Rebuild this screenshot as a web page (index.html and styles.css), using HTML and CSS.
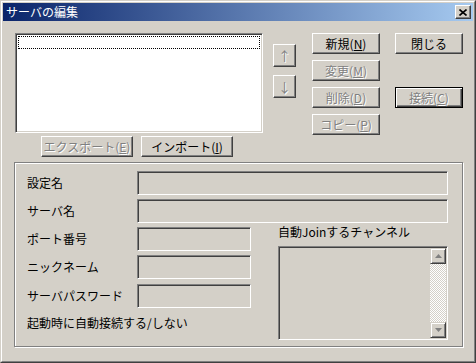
FILE: index.html
```html
<!DOCTYPE html>
<html lang="ja">
<head>
    <meta charset="UTF-8">
    <title>サーバの編集</title>
    <link rel="stylesheet" href="styles.css">
</head>
<body>

<div class="window">
  <div class="frame">
    <div class="titlebar">
        <span class="title">サーバの編集</span>
        <button class="close-btn">
            <svg width="8" height="7" viewBox="0 0 8 7"><path d="M0.5 0.5 L7.5 6.5 M7.5 0.5 L0.5 6.5" stroke="#000" stroke-width="1.6" fill="none"/></svg>
        </button>
    </div>

    <div class="content">
        <div class="top">
            <div class="list-col">
                <div class="listbox">
                    <div class="focus-row"></div>
                </div>
                <div class="io-row">
                    <button class="btn wide disabled">エクスポート(<u>E</u>)</button>
                    <button class="btn wide">インポート(<u>I</u>)</button>
                </div>
            </div>

            <div class="arrows">
                <button class="btn square disabled">↑</button>
                <button class="btn square disabled">↓</button>
            </div>

            <div class="cmds">
                <button class="btn">新規(<u>N</u>)</button>
                <button class="btn disabled">変更(<u>M</u>)</button>
                <button class="btn disabled">削除(<u>D</u>)</button>
                <button class="btn disabled">コピー(<u>P</u>)</button>
            </div>

            <div class="side">
                <button class="btn">閉じる</button>
                <button class="btn default disabled connect">接続(<u>C</u>)</button>
            </div>
        </div>

        <div class="group">
            <div class="row">
                <label class="label">設定名</label>
                <div class="field"></div>
            </div>
            <div class="row">
                <label class="label">サーバ名</label>
                <div class="field"></div>
            </div>

            <div class="lower">
                <div class="left-col">
                    <div class="row">
                        <label class="label">ポート番号</label>
                        <div class="field small"></div>
                    </div>
                    <div class="row">
                        <label class="label">ニックネーム</label>
                        <div class="field small"></div>
                    </div>
                    <div class="row">
                        <label class="label">サーバパスワード</label>
                        <div class="field small"></div>
                    </div>
                    <div class="autoconnect">起動時に自動接続する/しない</div>
                </div>

                <div class="right-col">
                    <div class="chan-label">自動Joinするチャンネル</div>
                    <div class="chan-list">
                        <div class="scrollbar">
                            <div class="sb-btn">
                                <svg width="7" height="4" viewBox="0 0 7 4"><path d="M3.5 0 L7 4 L0 4 Z" fill="#808080"/></svg>
                            </div>
                            <div class="sb-track"></div>
                            <div class="sb-btn">
                                <svg width="7" height="4" viewBox="0 0 7 4"><path d="M0 0 L7 0 L3.5 4 Z" fill="#808080"/></svg>
                            </div>
                        </div>
                    </div>
                </div>
            </div>
        </div>
    </div>
  </div>
</div>

</body>
</html>
```

FILE: styles.css
```css
body {
    margin: 0;
    padding: 0;
    background-color: #d4d0c8;
    font-family: "Noto Sans CJK JP", "DejaVu Sans", sans-serif;
    font-size: 12px;
    color: #000;
}

.window {
    box-sizing: border-box;
    width: 476px;
    height: 363px;
    border: 1px solid;
    border-color: #d4d0c8 #404040 #404040 #d4d0c8;
    overflow: hidden;
}

.frame {
    box-sizing: border-box;
    height: 100%;
    border: 1px solid;
    border-color: #fff #808080 #808080 #fff;
    padding: 1px;
}

.titlebar {
    height: 18px;
    display: flex;
    align-items: center;
    justify-content: space-between;
    padding: 0 2px 0 3px;
    background: linear-gradient(to right, #0a246a, #a6caf0);
}

.title {
    color: white;
    font-size: 12px;
    line-height: 18px;
}

.close-btn {
    box-sizing: border-box;
    width: 16px;
    height: 14px;
    padding: 0;
    display: flex;
    align-items: center;
    justify-content: center;
    background-color: #d4d0c8;
    border: 1px solid;
    border-color: #fff #404040 #404040 #fff;
    box-shadow: inset -1px -1px #808080;
}

.content {
    padding: 12px 0 0 12px;
}

.top {
    display: flex;
    align-items: flex-start;
}

.list-col {
    width: 248px;
}

.listbox {
    box-sizing: border-box;
    height: 100px;
    background-color: white;
    border: 1px solid;
    border-color: #808080 #fff #fff #808080;
    box-shadow: inset 1px 1px #404040, inset -1px -1px #d4d0c8;
    padding: 1px;
}

.focus-row {
    height: 11px;
    margin: 1px 1px 0 1px;
    border: 1px dotted #000;
}

.io-row {
    display: flex;
    gap: 8px;
    padding-left: 26px;
    margin-top: 3px;
}

.btn {
    box-sizing: border-box;
    width: 68px;
    height: 21px;
    padding: 0;
    font-family: "Noto Sans CJK JP", "DejaVu Sans", sans-serif;
    font-size: 12px;
    line-height: 17px;
    color: #000;
    background-color: #d4d0c8;
    border: 1px solid;
    border-color: #fff #404040 #404040 #fff;
    box-shadow: inset -1px -1px #808080;
    text-align: center;
}

.btn.wide {
    width: 92px;
}

.btn.square {
    width: 23px;
    height: 23px;
    font-size: 13px;
}

.btn.disabled {
    color: #808080;
    text-shadow: 1px 1px #fff;
}

.btn.default {
    border: 1px solid #000;
    box-shadow: inset 1px 1px #fff, inset -1px -1px #404040, inset -2px -2px #808080;
}

.arrows {
    display: flex;
    flex-direction: column;
    gap: 8px;
    margin-left: 10px;
    padding-top: 11px;
}

.cmds {
    display: flex;
    flex-direction: column;
    gap: 6px;
    margin-left: 16px;
}

.side {
    display: flex;
    flex-direction: column;
    margin-left: 15px;
}

.connect {
    margin-top: 33px;
}

.group {
    box-sizing: border-box;
    width: 449px;
    height: 185px;
    margin: 5px 0 0 -1px;
    padding: 8px 14px 0 12px;
    border: 1px solid #808080;
    box-shadow: inset 1px 1px #fff, 1px 1px #fff;
}

.row {
    display: flex;
    align-items: center;
    margin-bottom: 4px;
}

.label {
    width: 110px;
    line-height: 16px;
}

.field {
    box-sizing: border-box;
    flex: 1;
    height: 24px;
    border: 1px solid;
    border-color: #808080 #fff #fff #808080;
    box-shadow: inset 1px 1px #404040, inset -1px -1px #d4d0c8;
}

.field.small {
    flex: none;
    width: 114px;
}

.lower {
    display: flex;
    margin-top: 1px;
}

.left-col {
    width: 224px;
}

.left-col .row:nth-child(2) {
    margin-bottom: 5px;
}

.autoconnect {
    line-height: 16px;
    margin-top: 7px;
}

.right-col {
    margin-left: 27px;
    width: 170px;
}

.chan-label {
    line-height: 16px;
    margin-top: -3px;
}

.chan-list {
    box-sizing: border-box;
    height: 94px;
    margin-top: 6px;
    display: flex;
    justify-content: flex-end;
    padding: 1px;
    border: 1px solid;
    border-color: #808080 #fff #fff #808080;
    box-shadow: inset 1px 1px #404040, inset -1px -1px #d4d0c8;
}

.scrollbar {
    width: 16px;
    display: flex;
    flex-direction: column;
}

.sb-btn {
    box-sizing: border-box;
    height: 16px;
    display: flex;
    align-items: center;
    justify-content: center;
    border: 1px solid;
    border-color: #d4d0c8 #404040 #404040 #d4d0c8;
    box-shadow: inset 1px 1px #fff, inset -1px -1px #808080;
}

.sb-track {
    flex: 1;
    background: repeating-conic-gradient(#fff 0 25%, #d4d0c8 0 50%) 0 0 / 2px 2px;
}
```
